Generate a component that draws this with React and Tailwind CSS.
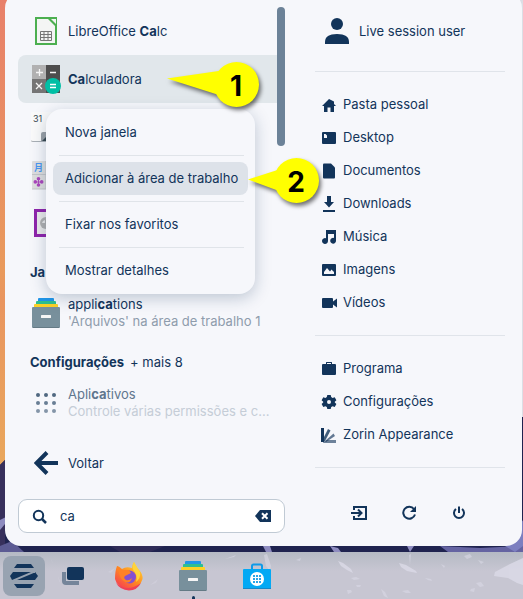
import React, { useState } from "react";

const INK = "#12345a";

function Backdrop() {
  return (
    <svg
      className="absolute inset-0 h-full w-full"
      viewBox="0 0 523 599"
      preserveAspectRatio="none"
      aria-hidden="true"
    >
      <defs>
        <linearGradient id="sky" x1="0" y1="0" x2="0" y2="1">
          <stop offset="0" stopColor="#e8806a" />
          <stop offset="0.45" stopColor="#e99a5c" />
          <stop offset="0.5" stopColor="#e9955f" />
          <stop offset="0.78" stopColor="#e9a75c" />
        </linearGradient>
      </defs>
      <rect width="523" height="599" fill="url(#sky)" />
      <rect x="400" width="123" height="418" fill="#dcdee5" />
      <path d="M0 465L5 460L30 440L400 417H523V599H0Z" fill="#1f234f" />
      <path d="M0 465L5 460V546H0Z" fill="#37305c" />
      <path d="M0 520L8 516L5 524L0 530Z" fill="#8e8cc0" />
      <path d="M0 546L12 541L24 552H0Z" fill="#5c5b93" />
      <path d="M110 546L165 546L150 552H120Z" fill="#2f2c58" />
      <path d="M440 546L480 548L523 546V552H448Z" fill="#6564a2" />
      <path d="M505 546L523 520V546L515 552Z" fill="#7c7fc0" />
      <path d="M263 546L270 546L272 552H266Z" fill="#8e8cc0" />
      <path d="M330 546L338 548L341 552H334ZM407 546H414L410 552Z" fill="#8e8cc0" />
    </svg>
  );
}

function BarTexture() {
  return (
    <svg
      className="absolute inset-0 h-full w-full"
      viewBox="0 0 523 47"
      preserveAspectRatio="none"
      aria-hidden="true"
    >
      <g fill="#dcdbe8">
        <g opacity="0.8">
          <path d="M399 11L406 13L416 19L417 21L407 19L401 15Z" />
          <path d="M495 20L510 12L523 6V33L517 31L508 26L494 24Z" />
          <path d="M338 9L343 11L351 17L353 21L347 18L341 14Z" />
        </g>
        <g opacity="0.55">
          <path d="M264 3L267 2L271 14L270 19L266 14Z" />
          <path d="M255 21L258 25L263 37L259 33Z" />
          <path d="M381 37L385 40L388 46L384 44Z" />
          <path d="M464 4L470 2L472 5L467 7ZM476 31L481 30L484 34L480 35ZM471 37L475 36L474 40L470 39Z" />
          <path d="M351 26L356 25L360 27L354 28ZM356 33L361 33L360 35L357 35ZM347 38L351 38L352 40L348 42Z" />
          <path d="M402 39L408 38L411 41L406 41ZM425 26L431 27L432 29L428 28ZM441 12L445 14L444 16ZM409 3L411 2L410 13Z" />
          <path d="M296 8L301 6L300 9ZM225 7L236 3L234 5ZM478 8L484 10L481 12Z" />
        </g>
        <path d="M150 33L158 27L156 31ZM108 20L115 16L111 21ZM50 5L53 11L52 10ZM58 24L61 32L59 29Z" opacity="0.35" />
      </g>
    </svg>
  );
}

function CalcSheetIcon() {
  return (
    <svg width="30" height="30" viewBox="0 0 30 30" aria-hidden="true">
      <rect x="5" y="2" width="20" height="26" fill="#f4f5f4" stroke="#4caf50" strokeWidth="2" />
      <path d="M16 2H26V12Z" fill="#4caf50" />
      <path d="M20 3H25V8Z" fill="#f4f5f4" />
      <path d="M9.500 15.500H20.500V24.500H9.500ZM9.500 18.500H20.500M9.500 21.500H20.500M13 15.500V24.500M17 15.500V24.500" fill="none" stroke="#777" />
    </svg>
  );
}

function CalculatorIcon() {
  return (
    <svg width="30" height="30" viewBox="0 0 30 30" aria-hidden="true">
      <rect x="1" y="1" width="14" height="14" fill="#b1b1b1" />
      <rect x="15" y="1" width="14" height="14" fill="#4d4d4d" />
      <rect x="1" y="15" width="14" height="14" fill="#757575" />
      <rect x="15" y="15" width="14" height="14" fill="#4d4d4d" />
      <path d="M8.500 5V12M5 8.500H12M19 8.500H25M5 19L11 25M11 19L5 25" stroke="#f5f5f5" strokeWidth="1.300" />
      <circle cx="22" cy="22" r="8" fill="#00bfa5" />
      <path d="M19 20.500H25M19 23.500H25" stroke="#fff" strokeWidth="1.300" />
    </svg>
  );
}

function CalendarIcon() {
  return (
    <svg width="30" height="32" viewBox="0 0 30 32" aria-hidden="true">
      <rect x="0" y="1" width="30" height="30" rx="1" fill="#fafafa" />
      <path d="M0 29.500Q0 30.500 2 30.500H30" fill="none" stroke="#a9afb5" />
      <path d="M10 30V23Q10 21 12 21H30V30Z" fill="#9aa0a5" />
      <path d="M11 30L20 21V30Z" fill="#37474f" />
      <text x="2" y="11" fontSize="9" fontFamily="Inter, sans-serif" fill="#37474f">31</text>
    </svg>
  );
}

function CharactersIcon() {
  return (
    <svg width="30" height="30" viewBox="0 0 30 30" aria-hidden="true">
      <rect x="1" y="1" width="28" height="28" rx="1" fill="#dedede" />
      <path d="M1 14.500H29M15 1V29M1 29H29" stroke="#c4c6c9" />
      <text x="3" y="11" fontSize="9" fontWeight="700" fontFamily="'Noto Sans CJK SC', sans-serif" fill="#4a96f0">月</text>
      <g fill="#ab47bc">
        <circle cx="7.500" cy="18.700" r="1.800" />
        <circle cx="7.500" cy="25" r="1.800" />
        <circle cx="4.300" cy="21.900" r="1.800" />
        <circle cx="10.700" cy="21.900" r="1.800" />
        <path d="M7 18H8V21.400H11V22.400H8V25H7V22.400H4V21.400H7Z" />
      </g>
    </svg>
  );
}

function FrameIcon() {
  return (
    <svg width="30" height="30" viewBox="0 0 30 30" aria-hidden="true">
      <rect x="4.500" y="2.500" width="24" height="25" fill="#e8e8e8" stroke="#8e24aa" strokeWidth="3" />
      <circle cx="15" cy="15" r="6" fill="#b0b0b0" />
      <path d="M11 15a4 4 0 0 1 3-3v3Z" fill="#e8e8e8" />
    </svg>
  );
}

function DrawerIcon() {
  return (
    <svg width="30" height="32" viewBox="0 0 30 32" aria-hidden="true">
      <path d="M7 4V2Q7 1 8 1H22Q23 1 23 2V4Z" fill="#2196e8" />
      <path d="M5 7V5Q5 4 6 4H24Q25 4 25 5V7Z" fill="#2fbf8f" />
      <path d="M3 10V8Q3 7 4 7H26Q27 7 27 8V10Z" fill="#fdd127" />
      <rect x="1" y="10" width="28" height="21" rx="1" fill="#78909c" />
      <path d="M2 30.500H28" stroke="#647a85" />
      <rect x="10" y="18" width="10" height="3" rx="0.500" fill="#f5f5f5" />
    </svg>
  );
}

function AppsGridIcon() {
  return (
    <svg width="30" height="30" viewBox="0 0 30 30" aria-hidden="true">
      {[7, 15, 23].map((y, i) =>
        [7, 15, 23].map((x) => (
          <circle key={x + "-" + y} cx={x} cy={y} r="2" fill={["#506880", "#687e94", "#8495a8"][i]} />
        ))
      )}
    </svg>
  );
}

const sideIcons = {
  home: <path d="M8 2L1 9H3V15H6.500V10.500H9.500V15H13V9H15L13 7V4.500Z" />,
  desktop: <path fillRule="evenodd" d="M2 2H14Q15 2 15 3V13Q15 14 14 14H2Q1 14 1 13V3Q1 2 2 2ZM3 4V8H6V5.500L4.500 4Z" />,
  doc: <path d="M3 0.500H10L14 4.500V14.500Q14 15.500 13 15.500H3Q2 15.500 2 14.500V1.500Q2 0.500 3 0.500Z" />,
  download: <path d="M6 0H10V6H13L8 11.500L3 6H6ZM2 14H14V16H2Z" />,
  music: <path d="M5 1H15V11.500A2.900 2.900 0 1 1 13 9V5H7V12A3 3 0 1 1 5 9.200Z" />,
  image: <path fillRule="evenodd" d="M2 2H14Q15 2 15 3V13Q15 14 14 14H2Q1 14 1 13V3Q1 2 2 2ZM3 12H13V10L10.500 7.500L9 9.500L6 6L3 10Z" />,
  video: <path d="M2 3H11Q12 3 12 4V6.500L16 3.500V12.500L12 9.500V12Q12 13 11 13H2Q1 13 1 12V4Q1 3 2 3Z" />,
  briefcase: <path fillRule="evenodd" d="M5 3V1.500Q5 1 5.500 1H10.500Q11 1 11 1.500V3H14Q15 3 15 4V13Q15 14 14 14H2Q1 14 1 13V4Q1 3 2 3ZM6 3H10V2H6Z" />,
  gear: (
    <path fillRule="evenodd" d="M6.300 1H9.700L10.200 3.100L11.600 3.900L13.700 3.300L15.400 6.200L13.800 7.700V8.500L15.400 10L13.700 12.900L11.600 12.200L10.200 13L9.700 15H6.300L5.800 13L4.400 12.200L2.300 12.900L0.600 10L2.200 8.500V7.700L0.600 6.200L2.300 3.300L4.400 3.900L5.800 3.100ZM8 6A2 2 0 1 0 8 10A2 2 0 1 0 8 6Z" />
  ),
  appearance: (
    <>
      <path d="M0 1H3V15H0Z" />
      <path d="M3 15L3 10L7 2L9.500 3.500L4 14Z" opacity="0.8" />
      <path d="M4 14L12.500 6.500L14 9L5 15Z" opacity="0.65" />
      <path d="M2 15.500L6 13H15V16H2Z" opacity="0.6" />
    </>
  ),
};

function SideItem({ icon, label }) {
  return (
    <li>
      <button className="flex h-[33px] w-full items-center gap-[6px] pl-[6px] text-left">
        <svg width="16" height="16" viewBox="0 0 16 16" fill={INK} aria-hidden="true">
          {sideIcons[icon]}
        </svg>
        <span>{label}</span>
      </button>
    </li>
  );
}

function IconRow({ icon, label, active = false, children }) {
  return (
    <button
      aria-label={label}
      className={
        active
          ? "flex h-12 w-full items-center gap-[7px] rounded-l-lg bg-[#e1e7eb] pl-[13px] text-left"
          : "flex h-12 w-full items-center gap-[7px] pl-[13px] text-left"
      }
    >
      {icon}
      {children}
    </button>
  );
}

const places = [
  ["home", "Pasta pessoal"],
  ["desktop", "Desktop"],
  ["doc", "Documentos"],
  ["download", "Downloads"],
  ["music", "Música"],
  ["image", "Imagens"],
  ["video", "Vídeos"],
];

const system = [
  ["briefcase", "Programa"],
  ["gear", "Configurações"],
  ["appearance", "Zorin Appearance"],
];

function ContextMenu() {
  const items = ["Nova janela", "Adicionar à área de trabalho", "Fixar nos favoritos", "Mostrar detalhes"];
  return (
    <div className="absolute top-[109px] left-[46px] w-[209px] rounded-2xl bg-[#f6f7fb] p-[7px] shadow-[0_4px_16px_rgba(18,52,90,0.25)]">
      {items.map((item, i) => (
        <React.Fragment key={item}>
          {i > 0 && <hr className="mr-1 ml-[6px] my-[6px] border-t border-[#e0e4e9]" />}
          <button
            className={
              i === 1
                ? "block h-[33px] w-full rounded-lg bg-[#dde2e9] pl-3 text-left whitespace-nowrap"
                : "block h-[33px] w-full rounded-lg pl-3 text-left whitespace-nowrap"
            }
          >
            {item}
          </button>
        </React.Fragment>
      ))}
    </div>
  );
}

function Callouts() {
  return (
    <div className="pointer-events-none absolute top-[55px] left-[160px] h-[160px] w-[170px]">
      <svg
        className="absolute inset-0 drop-shadow-[2px_3px_2px_rgba(0,0,0,0.55)]"
        width="170"
        height="160"
        viewBox="160 55 170 160"
        fill="#ffff00"
        aria-hidden="true"
      >
        <path d="M167 78.500L222 70.500L222 96Z" />
        <circle cx="236.500" cy="84.500" r="22.500" />
        <path d="M248 179.500L279 169.500L279 191Z" />
        <circle cx="296.500" cy="180.500" r="22.500" />
      </svg>
      <span className="absolute top-[8px] left-[53px] flex h-[46px] w-[46px] items-center justify-center text-[28px] font-bold text-black">1</span>
      <span className="absolute top-[104px] left-[113px] flex h-[46px] w-[46px] items-center justify-center text-[28px] font-bold text-black">2</span>
    </div>
  );
}

function PowerActions() {
  return (
    <div className="mt-7 flex justify-center pr-[2px]">
      <button aria-label="Sair" className="flex h-[34px] w-[50px] items-center justify-center">
        <svg width="16" height="16" viewBox="0 0 16 16" fill="none" stroke={INK} strokeWidth="2" aria-hidden="true">
          <path d="M3 5V2H15V14H3V11M0 8H10M7 4.500L10.500 8L7 11.500" />
        </svg>
      </button>
      <button aria-label="Reiniciar" className="flex h-[34px] w-[50px] items-center justify-center">
        <svg width="16" height="16" viewBox="0 0 16 16" fill="none" stroke={INK} strokeWidth="2" aria-hidden="true">
          <path d="M13 4A6 6 0 1 0 14 9.500" />
          <path d="M15 1V7H9Z" fill={INK} stroke="none" />
        </svg>
      </button>
      <button aria-label="Desligar" className="flex h-[34px] w-[50px] items-center justify-center">
        <svg width="16" height="16" viewBox="0 0 16 16" fill="none" stroke={INK} strokeWidth="2" aria-hidden="true">
          <path d="M8 1.500V8M5 4A5 5 0 1 0 11 4" />
        </svg>
      </button>
    </div>
  );
}

function SearchBox() {
  const [query, setQuery] = useState("ca");
  return (
    <div className="mt-3 flex h-[34px] items-center rounded-[9px] border border-[#c0cad4] bg-white px-[13px]">
      <svg width="15" height="15" viewBox="0 0 15 15" fill="none" stroke={INK} strokeWidth="2" aria-hidden="true">
        <circle cx="6.500" cy="6.500" r="4.700" />
        <path d="M10 10L14 14" strokeWidth="2.500" />
      </svg>
      <input
        aria-label="Pesquisar"
        value={query}
        onChange={(e) => setQuery(e.target.value)}
        className="ml-[13px] min-w-0 flex-1 bg-transparent outline-none"
      />
      <button aria-label="Limpar" onClick={() => setQuery("")}>
        <svg width="16" height="12" viewBox="0 0 16 12" aria-hidden="true">
          <path d="M0 6L5 0H16V12H5Z" fill={INK} />
          <path d="M7 3.300L12.500 8.700M12.500 3.300L7 8.700" stroke="#fff" strokeWidth="2" />
        </svg>
      </button>
    </div>
  );
}

function Taskbar() {
  return (
    <nav className="relative flex h-[47px] shrink-0 items-center bg-linear-to-b from-[#b5bac4] to-[#c7c6d2] to-40% pl-[3px]">
      <BarTexture />
      <button aria-label="Menu" className="relative flex h-10 w-[42px] items-center justify-center rounded-lg bg-[#98a3b1]">
        <svg width="28" height="24" viewBox="0 0 28 24" fill={INK} aria-hidden="true">
          <path d="M7 0H21L24 4H4Z" />
          <path d="M3 8H21L2 16L0 12Z" />
          <path d="M25 8L28 12L25 16H7L26 8Z" />
          <path d="M4 20H24L21 24H7Z" />
        </svg>
      </button>
      <button aria-label="Janelas abertas" className="relative ml-[17px]">
        <svg width="22" height="18" viewBox="0 0 22 18" aria-hidden="true">
          <path d="M2 5V14Q2 16 4 16H17" stroke="#75859a" strokeWidth="4" fill="none" />
          <rect x="4" y="-1" width="19" height="15" rx="2" fill="#c4c6d1" />
          <rect x="5" y="0" width="17" height="13" rx="2" fill={INK} />
        </svg>
      </button>
      <button aria-label="Firefox" className="relative ml-[30px]">
        <svg width="30" height="30" viewBox="0 0 30 30" aria-hidden="true">
          <defs>
            <linearGradient id="fox" x1="0.900" y1="0.100" x2="0.200" y2="1">
              <stop offset="0" stopColor="#ffd936" />
              <stop offset="0.500" stopColor="#ff8a1f" />
              <stop offset="1" stopColor="#f53d55" />
            </linearGradient>
          </defs>
          <path d="M3 5Q5 5 8 8Q12 5 18 7Q18 4 20 1Q22 6 25 9Q29 13 28.500 18A14 12.500 0 0 1 1 18Q1 10 3 5Z" fill="url(#fox)" />
          <path d="M2 22Q13 32 27 22Q23 29.500 15 29.500Q6 29 2 22Z" fill="#ef4056" />
          <circle cx="15.500" cy="16" r="6.500" fill="#8450d0" />
          <path d="M3 5L8 9L15 9L17 12L11 15Q9 17 12 19Q15 20 18 17Q16 23 11 21Q6 18 5 12Z" fill="#ff8125" />
          <path d="M20 1Q17 6 20 10Q24 15 22 21Q27 17 26 11Z" fill="#ffd43b" />
        </svg>
      </button>
      <button aria-label="Arquivos" className="relative ml-[34px]">
        <DrawerIcon />
        <span className="absolute -bottom-[8px] left-[14px] h-1 w-[3px] rounded-t-sm bg-[#12345a]" />
      </button>
      <button aria-label="Programas" className="relative ml-[34px]">
        <svg width="30" height="28" viewBox="0 0 30 28" aria-hidden="true">
          <path d="M10 7V4Q10 2.500 11.500 2.500H18.500Q20 2.500 20 4V7" fill="none" stroke="#0f9ae8" strokeWidth="2" />
          <rect x="1" y="7" width="28" height="20" rx="1" fill="#03a9f4" />
          <path d="M1 26.500H29" stroke="#1688c8" />
          <circle cx="15" cy="17" r="7" fill="#fff" />
          <g fill="#29a5e8">
            {[11, 14, 17].map((x) =>
              [13, 16, 19].map((y) => <rect key={x + "-" + y} x={x} y={y} width="2" height="2" />)
            )}
          </g>
        </svg>
      </button>
    </nav>
  );
}

export default function App() {
  return (
    <div className="relative flex min-h-screen flex-col overflow-hidden font-[Inter,sans-serif] text-[13px] leading-[17px] text-[#12345a]">
      <Backdrop />
      <main className="relative -mt-2 mr-px mb-[6px] ml-[5px] flex flex-1 rounded-2xl bg-[#f6f7fb] px-[13px] pt-[15px] pb-[13px]">
        <section className="flex w-[267px] shrink-0 flex-col">
          <div className="flex flex-1">
            <div className="min-w-0 flex-1">
              <IconRow icon={<CalcSheetIcon />} label="LibreOffice Calc">
                <span>LibreOffice <b>Ca</b>lc</span>
              </IconRow>
              <IconRow icon={<CalculatorIcon />} label="Calculadora" active>
                <span><b>Ca</b>lculadora</span>
              </IconRow>
              <IconRow icon={<CalendarIcon />} label="Agenda" />
              <IconRow icon={<CharactersIcon />} label="Caracteres" />
              <IconRow icon={<FrameIcon />} label="Captura" />
              <h2 className="flex h-[42px] items-center pt-2 pl-3 font-bold">Ja</h2>
              <IconRow icon={<DrawerIcon />} label="applications">
                <span className="flex min-w-0 flex-col">
                  <span>appli<b>ca</b>tions</span>
                  <span className="whitespace-nowrap text-[#8e9cac]">'Arquivos' na área de trabalho 1</span>
                </span>
              </IconRow>
              <h2 className="flex h-[42px] items-center gap-[6px] pt-2 pl-3">
                <b>Configurações</b>
                <span>+ mais 8</span>
              </h2>
              <IconRow icon={<AppsGridIcon />} label="Aplicativos">
                <span className="flex min-w-0 flex-col">
                  <span className="text-[#5f768e]">Apli<b>ca</b>tivos</span>
                  <span className="whitespace-nowrap text-[#c5cdd7]">Controle várias permissões e c...</span>
                </span>
              </IconRow>
            </div>
            <div className="h-[139px] w-2 rounded-full bg-[#6c8298]" />
          </div>
          <button className="flex h-12 items-center gap-[10px] pl-4 text-left">
            <svg width="24" height="24" viewBox="0 0 24 24" fill="none" stroke={INK} strokeWidth="4" aria-hidden="true">
              <path d="M24 12H3M13 1.500L2.500 12L13 22.500" />
            </svg>
            <span>Voltar</span>
          </button>
          <SearchBox />
        </section>
        <aside className="ml-[30px] min-w-0 flex-1 pr-1">
          <button className="flex h-12 w-full items-center gap-[10px] pl-[10px] text-left">
            <svg width="24" height="26" viewBox="0 0 24 26" fill={INK} aria-hidden="true">
              <circle cx="12" cy="6" r="6" />
              <path d="M0 26V24Q0 16 12 16T24 24V26Z" />
            </svg>
            <span>Live session user</span>
          </button>
          <hr className="mt-4 mb-4 border-t border-[#e0e4ea]" />
          <ul>
            {places.map(([icon, label]) => (
              <SideItem key={label} icon={icon} label={label} />
            ))}
          </ul>
          <hr className="mt-4 mb-4 border-t border-[#e0e4ea]" />
          <ul>
            {system.map(([icon, label]) => (
              <SideItem key={label} icon={icon} label={label} />
            ))}
          </ul>
          <hr className="mt-4 border-t border-[#e0e4ea]" />
          <PowerActions />
        </aside>
      </main>
      <Taskbar />
      <ContextMenu />
      <Callouts />
    </div>
  );
}
